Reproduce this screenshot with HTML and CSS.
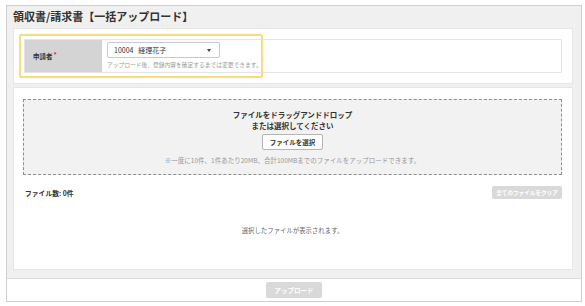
FILE: index.html
```html
<!DOCTYPE html>
<html lang="ja">

<head>
    <meta charset="UTF-8">
    <meta name="viewport" content="width=device-width, initial-scale=1.0">
    <title>領収書/請求書 一括アップロード</title>
    <link rel="stylesheet" href="styles.css">
</head>

<body>
    <div class="panel">
        <div class="panel-heading">
            <h1>領収書/請求書【一括アップロード】</h1>
        </div>
        <div class="panel-body">
            <!-- applicant -->
            <div class="card applicant-card">
                <div class="form-row">
                    <div class="form-label">申請者<span class="required">*</span></div>
                    <div class="form-field">
                        <div class="select-box">
                            <span>10004&nbsp;&nbsp;&nbsp;経理花子</span>
                            <span class="caret"></span>
                        </div>
                        <p class="hint">アップロード後、登録内容を確定するまでは変更できます。</p>
                    </div>
                </div>
                <div class="highlight"></div>
            </div>

            <!-- upload area -->
            <div class="card upload-card">
                <div class="drop-zone">
                    <p class="drop-title">ファイルをドラッグアンドドロップ<br>または選択してください</p>
                    <button class="select-btn">ファイルを選択</button>
                    <p class="drop-note">※一度に10件、1件あたり20MB、合計100MBまでのファイルをアップロードできます。</p>
                </div>
                <div class="file-count-row">
                    <span class="file-count">ファイル数: 0件</span>
                    <button class="clear-btn" disabled>全てのファイルをクリア</button>
                </div>
                <p class="empty-text">選択したファイルが表示されます。</p>
            </div>
        </div>
        <div class="panel-footer">
            <button class="upload-btn" disabled>アップロード</button>
        </div>
    </div>
</body>

</html>
```

FILE: styles.css
```css
* {
    margin: 0px;
    padding: 0px;
    box-sizing: border-box;
}

body {
    font-family: "Noto Sans CJK JP", "Noto Sans", sans-serif;
    color: #333;
    background-color: white;
    padding: 5px 4px 0px 6px;
}

.panel {
    width: 576px;
    height: 297px;
    border: 1px solid #cfcfcf;
    background-color: #f0f0f0;
    display: flex;
    flex-direction: column;
}

.panel-heading h1 {
    font-size: 11px;
    font-weight: 700;
    line-height: 21px;
    padding: 0px 6px;
    color: #333;
}

.panel-body {
    flex: 1;
    padding: 1px 8px 0px 6px;
    display: flex;
    flex-direction: column;
    gap: 3px;
}

.card {
    background-color: white;
    border: 1px solid #e6e6e6;
}

.applicant-card {
    position: relative;
    padding: 10px;
}

.form-row {
    display: flex;
    height: 34px;
    border: 1px solid #e4e4e4;
}

.form-label {
    width: 77px;
    background-color: #d4d4d4;
    font-size: 6.5px;
    font-weight: 700;
    display: flex;
    align-items: center;
    padding-left: 8px;
}

.required {
    color: #e0243c;
    margin-left: 1px;
    position: relative;
    top: -2px;
}

.form-field {
    padding: 2px 5px 0px;
}

.select-box {
    width: 113px;
    height: 16px;
    border: 1px solid #c9c9c9;
    border-radius: 2px;
    font-size: 7px;
    display: flex;
    align-items: center;
    justify-content: space-between;
    padding: 0px 8px 0px 6px;
}

.caret {
    width: 0;
    height: 0;
    border-left: 2.5px solid transparent;
    border-right: 2.5px solid transparent;
    border-top: 3px solid #444;
}

.hint {
    font-size: 5.75px;
    color: #9a9a9a;
    line-height: 9px;
    margin-top: 2px;
}

.highlight {
    position: absolute;
    left: 5px;
    top: 5px;
    width: 244px;
    height: 44px;
    border: 2px solid #f6dd7f;
    border-radius: 2px;
}

.upload-card {
    height: 183px;
    padding: 11px 10px 0px 9px;
}

.drop-zone {
    height: 76px;
    border: 1px dashed #8f8f8f;
    background-color: #f2f2f2;
    text-align: center;
    padding-top: 9px;
    display: flex;
    flex-direction: column;
    align-items: center;
}

.drop-title {
    font-size: 7.5px;
    font-weight: 700;
    line-height: 11px;
    color: #333;
}

.select-btn {
    font-family: inherit;
    font-size: 6.5px;
    font-weight: 700;
    color: #333;
    background-color: white;
    border: 1px solid #b5b5b5;
    border-radius: 2px;
    width: 61px;
    height: 16px;
    margin-top: 3px;
}

.drop-note {
    font-size: 6.5px;
    color: #999;
    line-height: 9px;
    margin-top: 6px;
}

.file-count-row {
    display: flex;
    justify-content: space-between;
    align-items: center;
    margin-top: 11px;
    padding-left: 2px;
}

.file-count {
    font-size: 6.8px;
    font-weight: 700;
}

.clear-btn,
.upload-btn {
    font-family: inherit;
    font-weight: 700;
    color: white;
    background-color: #d9d9d9;
    border: none;
    border-radius: 2px;
}

.clear-btn {
    font-size: 5.6px;
    width: 70px;
    height: 13px;
}

.empty-text {
    text-align: center;
    font-size: 6.4px;
    color: #666;
    margin-top: 27px;
}

.panel-footer {
    height: 23px;
    margin-top: 8px;
    background-color: white;
    border-top: 1px solid #dcdcdc;
    display: flex;
    justify-content: center;
    align-items: center;
}

.upload-btn {
    font-size: 6.5px;
    width: 56px;
    height: 16px;
}
```
